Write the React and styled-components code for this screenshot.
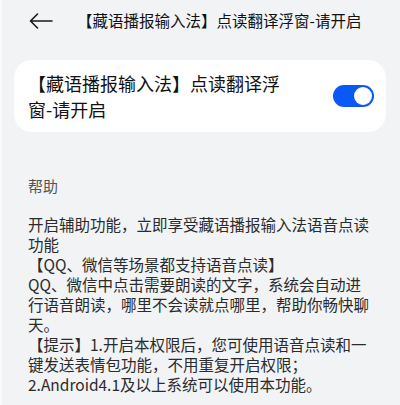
import styled, { createGlobalStyle } from "styled-components"

const GlobalStyle = createGlobalStyle`
  html, body {
    margin: 0;
    padding: 0;
    background: #f1f3f5;
  }
  body {
    font-family: "Noto Sans CJK SC", "Noto Sans", sans-serif;
  }
`

export default function App() {
  return (
    <Page>
      <GlobalStyle />
      <Header>
        <BackButton aria-label="返回">
          <svg width="24" height="16" viewBox="0 0 24 16" fill="none">
            <path
              d="M23 8H1.5M8.5 1L1.5 8l7 7"
              stroke="#1a1a1a"
              strokeWidth="1.6"
              strokeLinecap="round"
              strokeLinejoin="round"
            />
          </svg>
        </BackButton>
        <Title>【藏语播报输入法】点读翻译浮窗-请开启</Title>
      </Header>

      <Card>
        <CardLabel>【藏语播报输入法】点读翻译浮窗-请开启</CardLabel>
        <Switch $on>
          <Knob />
        </Switch>
      </Card>

      <Help>
        <HelpTitle>帮助</HelpTitle>
        <HelpText>
          <p>开启辅助功能，立即享受藏语播报输入法语音点读功能</p>
          <p>【QQ、微信等场景都支持语音点读】</p>
          <p>QQ、微信中点击需要朗读的文字，系统会自动进行语音朗读，哪里不会读就点哪里，帮助你畅快聊天。</p>
          <p>【提示】1.开启本权限后，您可使用语音点读和一键发送表情包功能，不用重复开启权限；</p>
          <p>2.Android4.1及以上系统可以使用本功能。</p>
        </HelpText>
      </Help>
    </Page>
  )
}

const Page = styled.div`
  width: 400px;
  height: 405px;
  overflow: hidden;
  background: #f1f3f5;
  border-left: 2px solid #fafafa;
  box-sizing: border-box;
`

const Header = styled.div`
  height: 40px;
  display: flex;
  align-items: center;
  padding-left: 27px;
`

const BackButton = styled.button`
  display: flex;
  align-items: center;
  padding: 0;
  border: none;
  background: none;
  width: 24px;
  height: 16px;
  margin-top: 1px;
`

const Title = styled.h1`
  margin: 0 0 0 24px;
  font-size: 15.5px;
  font-weight: 400;
  color: #111;
  white-space: nowrap;
`

const Card = styled.div`
  margin: 20px 14px 0 12px;
  height: 72px;
  background: #fff;
  border-radius: 18px;
  display: flex;
  align-items: center;
  justify-content: space-between;
  padding: 0 12px 0 14px;
`

const CardLabel = styled.div`
  width: 260px;
  font-size: 18px;
  line-height: 26px;
  color: #111;
`

const Switch = styled.div`
  width: 41px;
  height: 22px;
  border-radius: 11px;
  background: ${(p) => (p.$on ? "#0a59f7" : "#c4c4c4")};
  display: flex;
  align-items: center;
  justify-content: ${(p) => (p.$on ? "flex-end" : "flex-start")};
  padding: 0 2px;
  box-sizing: border-box;
`

const Knob = styled.div`
  width: 18px;
  height: 18px;
  border-radius: 50%;
  background: #fff;
`

const Help = styled.div`
  padding: 44px 26px 0 26px;
`

const HelpTitle = styled.div`
  font-size: 15px;
  line-height: 20px;
  color: #555;
  margin-bottom: 18px;
`

const HelpText = styled.div`
  font-size: 15.5px;
  line-height: 20px;
  color: #2b2b2b;

  p {
    margin: 0;
  }
`
